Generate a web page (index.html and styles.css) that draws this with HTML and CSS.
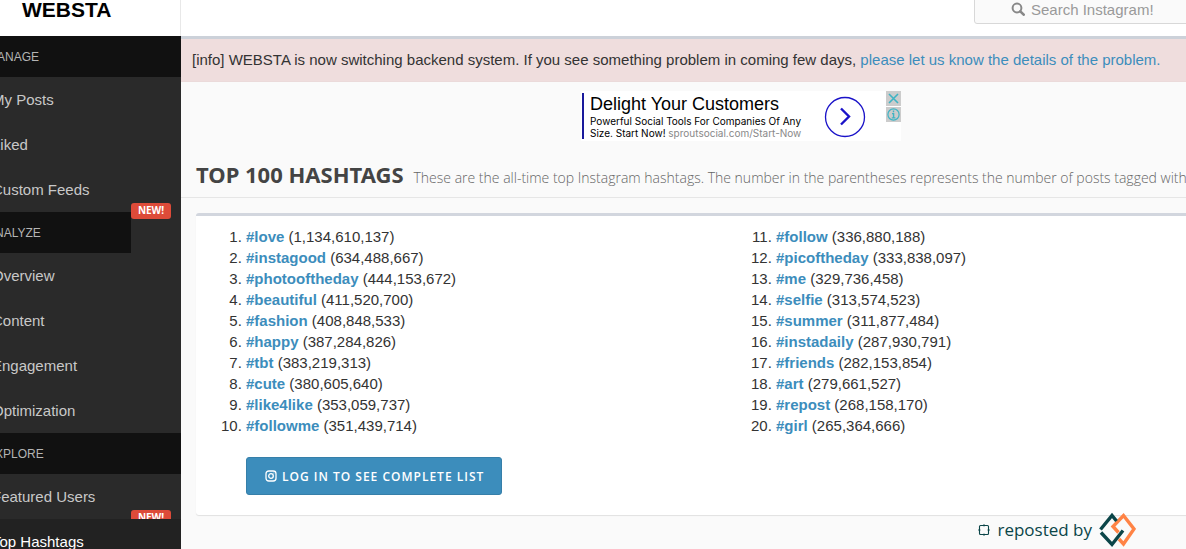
FILE: index.html
```html
<!DOCTYPE html>
<html lang="en">
<head>
  <meta charset="UTF-8">
  <meta name="viewport" content="width=device-width, initial-scale=1.0">
  <title>Top 100 Hashtags | WEBSTA</title>
  <link rel="stylesheet" href="styles.css">
</head>
<body>
  <header class="header">
    <a href="#" class="logo">WEBSTA</a>
    <form class="search">
      <label for="q" aria-label="Search">
        <svg width="14" height="14" viewBox="0 0 14 14" fill="none" stroke="#888" stroke-width="2">
          <circle cx="6" cy="6" r="4.4"/>
          <path d="M9.3 9.3l3.4 3.4" stroke-width="2.6" stroke-linecap="round"/>
        </svg>
      </label>
      <input type="text" id="q" name="q" placeholder="Search Instagram!">
    </form>
  </header>

  <div class="wrapper">
    <nav class="sidebar">
      <h2 class="menu-title">MANAGE</h2>
      <ul class="menu">
        <li><a href="#">My Posts</a></li>
        <li><a href="#">Liked</a></li>
        <li><a href="#">Custom Feeds <span class="badge">NEW!</span></a></li>
      </ul>
      <h2 class="menu-title menu-title-short">ANALYZE</h2>
      <ul class="menu">
        <li><a href="#">Overview</a></li>
        <li><a href="#">Content</a></li>
        <li><a href="#">Engagement</a></li>
        <li><a href="#">Optimization</a></li>
      </ul>
      <h2 class="menu-title">EXPLORE</h2>
      <ul class="menu">
        <li><a href="#">Featured Users <span class="badge">NEW!</span></a></li>
        <li class="active"><a href="#">Top Hashtags</a></li>
      </ul>
    </nav>

    <main class="content">
      <div class="alert">[info] WEBSTA is now switching backend system. If you see something problem in coming few days, <a href="#">please let us know the details of the problem.</a></div>

      <aside class="ad">
        <div class="ad-text">
          <div class="ad-title">Delight Your Customers</div>
          <div class="ad-body">Powerful Social Tools For Companies Of Any<br>Size. Start Now! <span>sproutsocial.com/Start-Now</span></div>
        </div>
        <a href="#" class="ad-arrow" aria-label="Open">
          <svg width="42" height="42" viewBox="0 0 42 42" fill="none" stroke="#1a12c8">
            <circle cx="21" cy="21" r="19.5" stroke-width="1.3"/>
            <path d="M17 12.5l8 8-8 8" stroke-width="2.4"/>
          </svg>
        </a>
        <div class="ad-choices">
          <button type="button" aria-label="Close ad">
            <svg width="15" height="15" viewBox="0 0 15 15" stroke="#3fb4c4" stroke-width="1.6"><path d="M3 3l9 9M12 3l-9 9"/></svg>
          </button>
          <button type="button" aria-label="Ad info">
            <svg width="15" height="15" viewBox="0 0 15 15" fill="none" stroke="#3fb4c4">
              <circle cx="7.5" cy="7.5" r="5.6" stroke-width="1.2"/>
              <path d="M7.5 3.6v1.6M6 6.6h1.6v4M5.8 10.9h3.6" stroke-width="1.4"/>
            </svg>
          </button>
        </div>
      </aside>

      <div class="page-header">
        <h1>TOP 100 HASHTAGS</h1>
        <small>These are the all-time top Instagram hashtags. The number in the parentheses represents the number of posts tagged with</small>
      </div>

      <section class="box">
        <div class="columns">
          <ol>
            <li><a href="#">#love</a> (1,134,610,137)</li>
            <li><a href="#">#instagood</a> (634,488,667)</li>
            <li><a href="#">#photooftheday</a> (444,153,672)</li>
            <li><a href="#">#beautiful</a> (411,520,700)</li>
            <li><a href="#">#fashion</a> (408,848,533)</li>
            <li><a href="#">#happy</a> (387,284,826)</li>
            <li><a href="#">#tbt</a> (383,219,313)</li>
            <li><a href="#">#cute</a> (380,605,640)</li>
            <li><a href="#">#like4like</a> (353,059,737)</li>
            <li><a href="#">#followme</a> (351,439,714)</li>
          </ol>
          <ol start="11">
            <li><a href="#">#follow</a> (336,880,188)</li>
            <li><a href="#">#picoftheday</a> (333,838,097)</li>
            <li><a href="#">#me</a> (329,736,458)</li>
            <li><a href="#">#selfie</a> (313,574,523)</li>
            <li><a href="#">#summer</a> (311,877,484)</li>
            <li><a href="#">#instadaily</a> (287,930,791)</li>
            <li><a href="#">#friends</a> (282,153,854)</li>
            <li><a href="#">#art</a> (279,661,527)</li>
            <li><a href="#">#repost</a> (268,158,170)</li>
            <li><a href="#">#girl</a> (265,364,666)</li>
          </ol>
        </div>
        <a href="#" class="btn">
          <svg width="12" height="12" viewBox="0 0 12 12" fill="none" stroke="#fff" stroke-width="1.3">
            <rect x="1" y="1" width="10" height="10" rx="2.8"/>
            <circle cx="6" cy="6" r="2.3"/>
            <circle cx="8.9" cy="3.1" r="0.5" fill="#fff" stroke="none"/>
          </svg>
          LOG IN TO SEE COMPLETE LIST
        </a>
      </section>
    </main>
  </div>

  <div class="repost">
    <svg width="12" height="12" viewBox="0 0 12 12" fill="none" stroke="#0b4548" stroke-width="1.1">
      <rect x="1.5" y="1.5" width="9" height="9" rx="1"/>
      <path d="M0 6h2.5M9.5 6H12M6 0v2.5M6 9.5V12" stroke-width="0.8"/>
    </svg>
    <span>reposted by</span>
    <svg width="37" height="36" viewBox="0 0 37 36" fill="none" stroke-width="3.4">
      <path d="M19.5 20.5L14 14.5L24.5 3.5L35 17L24.5 32L20 27" stroke="#ff8345"/>
      <path d="M1.5 17.5L13 3.5L17.5 9" stroke="#0b4548"/>
      <path d="M2 20.5L13 32.5L24 18.5" stroke="#0b4548"/>
    </svg>
  </div>
</body>
</html>
```
FILE: styles.css
```css
* {
  box-sizing: border-box;
}
body {
  margin: 0;
  height: 100vh;
  overflow: hidden;
  font-family: "Liberation Sans", Arial, sans-serif;
  font-size: 15px;
  line-height: 21px;
  color: #333;
  background: #fafafa;
}
a {
  color: #3c8dbc;
  text-decoration: none;
}
ul,
ol {
  margin: 0;
  padding: 0;
}

/* header */
.header {
  display: flex;
  justify-content: space-between;
  align-items: flex-start;
  height: 36px;
  overflow: hidden;
  background: #fff;
}
.logo {
  width: 181px;
  height: 36px;
  padding-left: 22px;
  border-right: 1px solid #e8e8e8;
  font-size: 21px;
  line-height: 20px;
  font-weight: bold;
  color: #000;
}
.search {
  display: flex;
  align-items: center;
  gap: 6px;
  width: 230px;
  height: 28px;
  margin: -4px -18px 0 0;
  padding: 0 0 2px 36px;
  border: 1px solid #d8d8d8;
  border-radius: 3px;
  background: #fafafa;
}
.search label {
  display: flex;
}
.search input {
  width: 150px;
  padding: 0;
  border: 0;
  outline: 0;
  background: none;
  font: inherit;
  color: #555;
}
.search input::placeholder {
  color: #999;
}

/* sidebar */
.wrapper {
  display: flex;
}
.sidebar {
  flex: none;
  width: 201px;
  margin-left: -20px;
  background: #2a2a2a;
}
.menu-title {
  margin: 0;
  padding: 1px 7px 0;
  font-size: 12px;
  line-height: 40px;
  font-weight: normal;
  color: #b4b4b4;
  background: #111;
}
.menu-title-short {
  margin-right: 50px;
}
.menu {
  list-style: none;
}
.menu a {
  display: block;
  position: relative;
  padding: 0 12px;
  line-height: 45px;
  color: #c8c8c8;
}
.menu .active a {
  color: #fff;
  background: #222;
}
.badge {
  position: absolute;
  right: 10px;
  bottom: -7px;
  width: 40px;
  height: 16px;
  border-radius: 3px;
  background: #dd4b39;
  font-family: "Noto Sans", sans-serif;
  font-size: 10px;
  line-height: 15px;
  font-weight: bold;
  text-align: center;
  color: #fff;
}

/* content, wider than the window */
.content {
  flex: 1;
  margin-right: -115px;
  border-top: 3px solid #ccd1d9;
}
.alert {
  padding: 11px;
  border-bottom: 1px solid #ebdada;
  background: #efdddd;
  line-height: 20px;
  white-space: nowrap;
}
.ad {
  display: flex;
  align-items: flex-start;
  width: 320px;
  height: 50px;
  margin: 9px auto 0;
  background: #fff;
}
.ad-text {
  flex: 1;
  margin: 2px 0 0 1px;
  padding-left: 6px;
  border-left: 2px solid #1a1a9c;
  color: #000;
  white-space: nowrap;
}
.ad-title {
  font-size: 18px;
  line-height: 22px;
}
.ad-body {
  font-family: Inter, sans-serif;
  font-size: 10px;
  line-height: 12px;
}
.ad-body span {
  color: #888;
}
.ad-arrow {
  display: flex;
  margin: 5px 20px 0 0;
}
.ad-choices {
  display: flex;
  flex-direction: column;
  gap: 1px;
}
.ad-choices button {
  display: flex;
  padding: 0;
  border: 0;
  background: #ccc;
}
.page-header {
  display: flex;
  align-items: baseline;
  gap: 10px;
  padding: 16px 15px 6px;
  border-bottom: 1px solid #e6e6e6;
  white-space: nowrap;
}
.page-header h1 {
  margin: 0;
  font-family: "Noto Sans", sans-serif;
  font-size: 22px;
  line-height: 34px;
  font-weight: bold;
  color: #444;
}
.page-header small {
  font-family: "Open Sans", sans-serif;
  font-size: 14px;
  font-weight: 300;
  color: #666;
}

/* hashtag list */
.box {
  margin: 15px 15px 0;
  padding: 10px 15px 20px;
  border-top: 3px solid #d2d6de;
  border-radius: 3px;
  background: #fff;
  box-shadow: 0 1px 1px rgba(0, 0, 0, 0.1);
}
.columns {
  display: grid;
  grid-template-columns: 1fr 1fr;
  margin-bottom: 21px;
}
.columns ol {
  padding-left: 35px;
}
.columns li a {
  font-weight: bold;
}
.btn {
  display: inline-flex;
  align-items: center;
  gap: 5px;
  height: 38px;
  margin-left: 35px;
  padding: 0 17px 0 18px;
  border: 1px solid #367fa9;
  border-radius: 3px;
  background: #3c8dbc;
  font-family: "Open Sans", sans-serif;
  font-size: 12px;
  font-weight: 600;
  letter-spacing: 1px;
  color: #fff;
  vertical-align: top;
}

/* credit over the page corner */
.repost {
  display: flex;
  align-items: center;
  gap: 7px;
  position: absolute;
  right: 50px;
  bottom: 1px;
  font-family: "Open Sans", sans-serif;
  font-size: 17px;
  line-height: 24px;
  font-weight: 500;
  color: #0b4548;
}
```
